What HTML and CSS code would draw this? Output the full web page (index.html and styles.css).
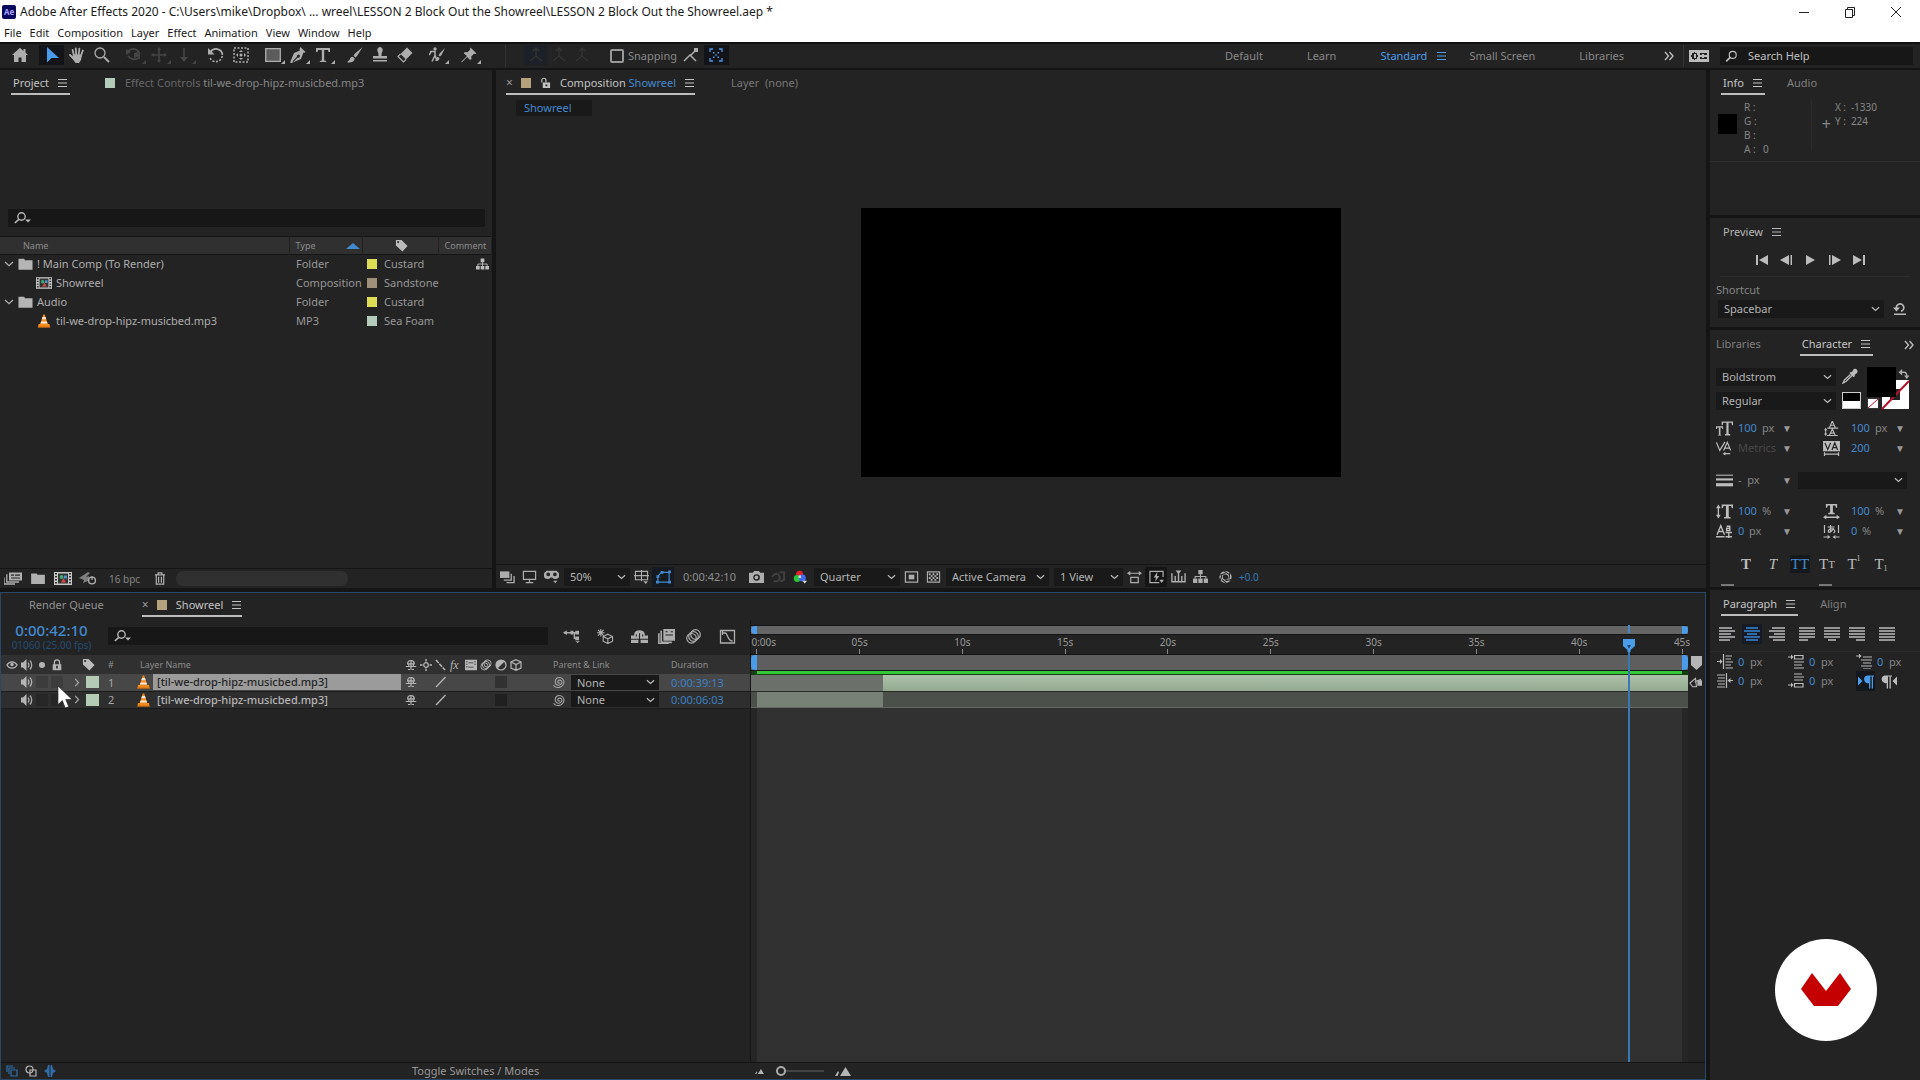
FILE: index.html
```html
<!DOCTYPE html>
<html lang="en">
<head>
<meta charset="utf-8">
<title>Adobe After Effects 2020</title>
<link rel="stylesheet" href="styles.css">
</head>
<body>
<svg class="sprite" aria-hidden="true">
  <symbol id="home" viewBox="0 0 16 16"><path fill="currentColor" d="M8 .8 0 8h2v7h4.500v-4.500h3V15H14V8h2L13.500 5.600V2h-2v1.900z"/></symbol>
  <symbol id="arrow" viewBox="0 0 16 16"><path fill="currentColor" d="M3 0v15.500l4.500-4.500H15z"/></symbol>
  <symbol id="hand" viewBox="0 0 16 16"><path fill="none" stroke="currentColor" stroke-width="1.800" stroke-linecap="round" d="M5 9 3.600 3M7.200 8 6.800 1.400M9.600 8l.8-6.400M11.800 9l2-5.500M4.500 11.500 1 8"/><path fill="currentColor" d="M4 7.500h9L12 13l-2 3H6.500L3 11z"/></symbol>
  <symbol id="zoomer" viewBox="0 0 16 16"><g fill="none" stroke="currentColor"><circle cx="6" cy="6" r="5" stroke-width="1.300"/><path stroke-width="2" d="m10 10 5 5"/></g></symbol>
  <symbol id="orbit" viewBox="0 0 16 16"><path fill="none" stroke="currentColor" stroke-width="1.800" d="M1 5c4-4 8-4 11-1l2 3M2 9c3 4 8 4 11 2M8 8h5v4"/><path fill="currentColor" d="M0 2v6l5-3zM8 6l4-1v5l-4 1z"/></symbol>
  <symbol id="pan" viewBox="0 0 16 16"><path fill="none" stroke="currentColor" stroke-width="1.500" d="M8 1v14M1 8h14"/><path fill="currentColor" d="m8 0 2 3H6zm0 16 2-3H6zM0 8l3-2v4zm16 0-3-2v4z"/></symbol>
  <symbol id="dolly" viewBox="0 0 16 16"><path fill="currentColor" d="M7.200 1h1.600v9H12l-4 5-4-5h3.200z"/></symbol>
  <symbol id="rotate" viewBox="0 0 16 16"><path fill="none" stroke="currentColor" stroke-width="1.700" d="M2.500 5A6.400 6.400 0 0 1 14.400 8"/><path fill="none" stroke="currentColor" stroke-width="1.600" stroke-dasharray="2 1.500" d="M14.200 9A6.400 6.400 0 0 1 1.700 10"/><path fill="currentColor" d="M0 1v6.500h6.500z"/></symbol>
  <symbol id="anchor" viewBox="0 0 16 16"><path fill="none" stroke="currentColor" stroke-width="1.500" stroke-dasharray="2 1.500" d="M1 1h14v14H1z"/><path fill="currentColor" d="m8 3 2 2H6zm0 10 2-2H6zM3 8l2-2v4zm10 0-2-2v4z"/><circle cx="8" cy="8" r="1.500" fill="currentColor"/></symbol>
  <symbol id="rect" viewBox="0 0 16 16"><path fill="#5c5c5c" stroke="currentColor" stroke-width="1.300" d="M.7 1.700h14.600v12.600H.7z"/></symbol>
  <symbol id="pen" viewBox="0 0 16 16"><path fill="currentColor" fill-rule="evenodd" d="m10.500 0 5 5-1.500 1-.6-.6L11 12l-9.500 4L0 15.500 4 6l6-2.500-.6-.9zM2.500 14.200 7 9.700a1.500 1.500 0 1 1 .8.800L3.300 15z"/></symbol>
  <symbol id="type" viewBox="0 0 16 16"><path fill="currentColor" d="M1 1h14v4h-1.500l-.6-2H9.200v10.500l2 .5V15H4.800v-1l2-.5V3H3.100l-.6 2H1z"/></symbol>
  <symbol id="brush" viewBox="0 0 16 16"><path fill="currentColor" d="M15.500.3 8 6.500 6.500 8.800l2 1.800L10 9zM5.800 9.800c-2 0-2.500 1-3 2.700L0 15.200c3 .8 7 0 7.800-3.500z"/></symbol>
  <symbol id="stamp" viewBox="0 0 16 16"><path fill="currentColor" d="M8 0a3 3 0 0 1 2.500 4.200C9.500 6 9.500 7 9.500 9H15v2.500H1V9h5.500c0-2 0-3-1-4.800A3 3 0 0 1 8 0zM1 13h14v1.500H1z"/></symbol>
  <symbol id="eraser" viewBox="0 0 16 16"><path fill="currentColor" d="M10 .5 15.500 6 9 12.500 3.500 7z"/><path fill="none" stroke="currentColor" stroke-width="1.200" d="M3.500 7 1 9.500 6.500 15 9 12.500"/></symbol>
  <symbol id="roto" viewBox="0 0 16 16"><path fill="none" stroke="currentColor" stroke-width="1.500" d="M1 4.500h5v4l-3 6M6 8l2 6M0 8l2-3"/><circle cx="6" cy="2" r="1.700" fill="currentColor"/><path fill="currentColor" d="m16 1-5 5-1.500 2.500 1.500 1L12.500 8zM9 10c-2 0-1 2-3 3.500 2 1 4.500 0 4.500-2.500z"/></symbol>
  <symbol id="pin" viewBox="0 0 16 16"><path fill="currentColor" d="m9.500.5 6 6-1.500.5-1-.3-2.800 2.800.3 2.500-1.500 1L6.200 10 1 15.200 0 15l6-6L2.800 6.500l1-1.500 2.700.3 2.800-2.700L9 1.500z"/></symbol>
  <symbol id="axes" viewBox="0 0 16 16"><path fill="none" stroke="currentColor" stroke-width="1.300" d="M8 1v8l-6 5M8 9l6 5M5 4l3-3 3 3"/></symbol>
  <symbol id="snap" viewBox="0 0 16 16"><path fill="none" stroke="currentColor" stroke-width="1.500" d="m1 14 6-6 6 6M8 8l4-4"/><path fill="currentColor" d="M11 1h4v4h-4z"/></symbol>
  <symbol id="focus" viewBox="0 0 16 16"><path fill="none" stroke="currentColor" stroke-width="1.300" d="M2 5V2h3M11 2h3v3M14 11v3h-3M5 14H2v-3"/><path fill="currentColor" d="M5 5h1.500v1.500H5zm4.500 0H11v1.500H9.500zM5 9.500h1.500V11H5zm4.500 0H11V11H9.500zM7.300 7.300h1.400v1.400H7.300z"/></symbol>
  <symbol id="burger" viewBox="0 0 10 10"><path fill="none" stroke="currentColor" stroke-width="1.200" d="M0 1.500h9M0 5h9M0 8.500h9"/></symbol>
  <symbol id="more" viewBox="0 0 10 10"><path fill="none" stroke="currentColor" stroke-width="1.400" d="m1 1 3.500 4L1 9m4.500-8L9 5 5.500 9"/></symbol>
  <symbol id="workpanel" viewBox="0 0 20 12"><path fill="currentColor" fill-rule="evenodd" d="M0 0h20v12H0zM3 3v2H2v2h1v2h2v1h1V9h2V7h1V5H8V3H6V2H5v1zm2 1h2v4H5zm6-1v2h2V4h2v1h3V3zm0 4v2h7V7h-3v1h-2V7z"/></symbol>
  <symbol id="search" viewBox="0 0 16 16"><g fill="none" stroke="currentColor"><circle cx="9.500" cy="6" r="4.300" stroke-width="1.400"/><path stroke-width="2" d="M6.300 9 1.500 14"/></g></symbol>
  <symbol id="searchmenu" viewBox="0 0 18 12"><g fill="none" stroke="currentColor"><circle cx="7.500" cy="4.500" r="3.700" stroke-width="1.400"/><path stroke-width="1.700" d="M4.800 7.300.8 11"/></g><path fill="currentColor" d="M11 7.500h6L14 10.500z"/></symbol>
  <symbol id="lock" viewBox="0 0 12 14"><path fill="none" stroke="currentColor" stroke-width="1.500" d="M3 7V4a3 3 0 0 1 6 0v3"/><path fill="currentColor" fill-rule="evenodd" d="M1 6h10v7H1zm4 2v3h2V8z"/></symbol>
  <symbol id="unlock" viewBox="0 0 12 14"><path fill="none" stroke="currentColor" stroke-width="1.300" d="M2 6V3.500a2.200 2.200 0 0 1 4.500 0V6"/><path fill="currentColor" fill-rule="evenodd" d="M3 6h8v6H3zm3 2v2h2V8z"/></symbol>
  <symbol id="tag" viewBox="0 0 14 14"><path fill="currentColor" fill-rule="evenodd" d="M1 1h6l6.500 6.500-5.500 6L1 7zm2.300 1.200a1.100 1.100 0 1 0 .1 0z"/></symbol>
  <symbol id="folder" viewBox="0 0 16 12"><path fill="currentColor" d="M.5.5h6l1 1.500h8V12H.5z"/></symbol>
  <symbol id="compicon" viewBox="0 0 18 13"><path fill="#c8c8c8" d="M0 0h18v13H0z"/><path fill="#333" d="M1 1h2v1.500H1zm0 3h2v1.500H1zm0 3h2v1.500H1zm0 3h2v1.500H1zM15 1h2v1.500h-2zm0 3h2v1.500h-2zm0 3h2v1.500h-2zm0 3h2v1.500h-2zM4 1.500h10v10H4z"/><circle cx="7.500" cy="5" r="2" fill="#3dab6c"/><path fill="#5191c9" d="M10 3.500h3v3h-3z"/><path fill="#d14a42" d="m9.500 6 2.500 4.500H7z"/></symbol>
  <symbol id="cone" viewBox="0 0 14 16"><path fill="#f08a1d" d="M6.200.5h1.600l3.500 11h2l.7 4H0l.7-4h2z"/><path fill="#f4e8dc" d="M5.300 3.500h3.400l.8 2.600h-5zM3.700 8.600h6.600l.7 2.300H3z"/><path fill="#b75b0d" d="M0 14.500h14v1H0z"/></symbol>
  <symbol id="tree" viewBox="0 0 14 13"><path fill="currentColor" d="M5 0h4v4H5zM0 8h4v4H0zm5 0h4v4H5zm5 0h4v4h-4z"/><path fill="none" stroke="currentColor" d="M7 4v4M2 8V6h10v2"/></symbol>
  <symbol id="chev" viewBox="0 0 10 6"><path fill="none" stroke="currentColor" stroke-width="1.300" d="m1 1 4 3.700L9 1"/></symbol>
  <symbol id="chevr" viewBox="0 0 6 10"><path fill="none" stroke="currentColor" stroke-width="1.400" d="m1 1 3.700 4L1 9"/></symbol>
  <symbol id="interpret" viewBox="0 0 18 12"><path fill="currentColor" fill-rule="evenodd" d="M5 0h13v8H5zm2 2v1.300h3V2zm4 0v1.300h5V2zM7 5v1h9V5z"/><path fill="none" stroke="currentColor" stroke-width="1.300" d="M3.500 2.500H2.800v7H15M0 5v6.500h11"/></symbol>
  <symbol id="gpu" viewBox="0 0 18 13"><path fill="currentColor" d="m0 6 9-6 2 1-4 4 3-1-1 5-5 2 1-3z" opacity=".65"/><circle cx="13" cy="8.500" r="3.400" fill="none" stroke="currentColor" stroke-width="1.400"/><path fill="none" stroke="currentColor" stroke-width="1.200" d="M13 4v4"/></symbol>
  <symbol id="trash" viewBox="0 0 12 14"><path fill="none" stroke="currentColor" stroke-width="1.300" d="M.5 3h11M4 3V1h4v2M2 3v10h8V3M4.500 5v6.500M7.500 5v6.500"/></symbol>
  <symbol id="previews" viewBox="0 0 16 14"><path fill="currentColor" d="M0 1h10v7H0z"/><path fill="none" stroke="currentColor" stroke-width="1.400" d="M12 3.500v6.800H4M15 6v7H7"/></symbol>
  <symbol id="monitor" viewBox="0 0 16 14"><path fill="none" stroke="currentColor" stroke-width="1.300" d="M1.500 1h13v8.500h-13zM8 9.500V13M4 13h8"/></symbol>
  <symbol id="goggles" viewBox="0 0 18 15"><path fill="currentColor" fill-rule="evenodd" d="M3 0h12l3 3v4c0 3-6 4-8 1H8C6 11 0 10 0 7V3zm2 2.200a2.200 2.200 0 1 0 .1 4.400 2.200 2.200 0 0 0 0-4.400zm8 0a2.200 2.200 0 1 0 .1 4.400 2.200 2.200 0 0 0 0-4.400zM11 12h5l-2.500 3z"/></symbol>
  <symbol id="gridopt" viewBox="0 0 16 15"><path fill="none" stroke="currentColor" stroke-width="1.200" d="M1.500 1.500h13v9h-13zM8 0v12M0 6h16"/><path fill="currentColor" d="M10 12h5l-2.500 3z"/></symbol>
  <symbol id="mask" viewBox="0 0 16 14"><path fill="none" stroke="currentColor" stroke-width="1.300" d="M2 12.500V6l4-4h8v10.500z"/><path fill="currentColor" d="M0 11h3v3H0zm13 0h3v3h-3zM13 0h3v3h-3zM5 .5h3v3H5zM.5 5h3v3h-3z"/></symbol>
  <symbol id="camera" viewBox="0 0 16 13"><path fill="currentColor" fill-rule="evenodd" d="M0 2h4l1.500-2h5L12 2h4v11H0zm8 1.500a3.500 3.500 0 1 0 .1 7 3.500 3.500 0 0 0 0-7zm0 1.500a2 2 0 1 1-.1 4 2 2 0 0 1 0-4z"/></symbol>
  <symbol id="showsnap" viewBox="0 0 16 14"><path fill="none" stroke="currentColor" stroke-width="2" d="M1 7c3-4 6-5 8-1s-3 7-6 5M9 2h5v8l-4 2"/></symbol>
  <symbol id="rgb" viewBox="0 0 16 14"><circle cx="7" cy="4" r="3.700" fill="#e3202b"/><circle cx="4.500" cy="8.500" r="3.700" fill="#27c437"/><circle cx="10" cy="8" r="3.700" fill="#4569f0"/><path fill="#ddd" d="M10 11h5l-2.500 3zM6 5.500h2.500V8H6z"/></symbol>
  <symbol id="roi" viewBox="0 0 16 14"><path fill="none" stroke="currentColor" stroke-width="1.300" d="M1.500 1.500h13v11h-13z"/><path fill="currentColor" d="M5 4.500h6v5H5z"/></symbol>
  <symbol id="alpha" viewBox="0 0 16 14"><path fill="none" stroke="currentColor" stroke-width="1.200" d="M1.500 1.500h13v11h-13z"/><path fill="currentColor" d="M3 3h2v2H3zm4 0h2v2H7zm4 0h2v2h-2zM5 5h2v2H5zm4 0h2v2H9zM3 7h2v2H3zm4 0h2v2H7zm4 0h2v2h-2zM5 9h2v2H5zm4 0h2v2H9z"/></symbol>
  <symbol id="par" viewBox="0 0 16 14"><path fill="none" stroke="currentColor" stroke-width="1.300" d="M1 3h14M4 7.500h8V13H4z"/><path fill="currentColor" d="m0 3 3.500-2.500v5zm16 0-3.500-2.500v5z"/></symbol>
  <symbol id="fast" viewBox="0 0 16 14"><path fill="none" stroke="currentColor" stroke-width="1.300" d="M11 13H1V1h14v6"/><path fill="currentColor" d="m9 1.500-4 6h2.500L6.500 12l4.500-6H8.500zM11 10h5l-2.500 3.500z"/></symbol>
  <symbol id="tlbtn" viewBox="0 0 16 14"><path fill="none" stroke="currentColor" stroke-width="1.500" d="M1 3v9h14V3M4.500 6v6M8 3v9M11.500 6v6"/><path fill="currentColor" d="M5 0h6L8 4z"/></symbol>
  <symbol id="shutter" viewBox="0 0 16 16"><circle cx="8" cy="8" r="5" fill="none" stroke="currentColor" stroke-width="4"/><path fill="none" stroke="#232323" stroke-width="1.200" d="m6 1 6 4M13 3l-1 7M15 11l-7 1M9 15l-5-4M2 12l2-6M1 6l7-2"/></symbol>
  <symbol id="flow" viewBox="0 0 18 14"><path fill="none" stroke="currentColor" stroke-width="1.400" d="M1 3h8M9 3h3v6h2M9 3h7"/><path fill="currentColor" d="M0 3 4 .5v5zM8 1h3v4H8zm5 0h4v4h-4zm0 6h4v4h-4zm0 5h5l-2.500 2z"/></symbol>
  <symbol id="draft" viewBox="0 0 18 16"><path fill="none" stroke="currentColor" stroke-width="1.200" d="m11.500 5.500 5 2.500v5l-5 2.500-5-2.500V8zM6.500 8l5 2.500 5-2.500M11.500 10.500v5M4 0v8M0 4h8M1 1l6 6M7 1 1 7"/></symbol>
  <symbol id="shy" viewBox="0 0 16 14"><path fill="none" stroke="currentColor" stroke-width="1.600" d="M3.500 5.500a4.500 4.500 0 0 1 9 0zM8 1v12M1 9h14M5 5v4M11 5v4"/><path fill="none" stroke="currentColor" stroke-width="1.500" d="M4 13h3M9 13h3"/></symbol>
  <symbol id="shyall" viewBox="0 0 16 14"><path fill="currentColor" d="M3 5a5 4 0 0 1 10 0v1h3v3H0V6h3zM0 10h7v3H0zm9 0h7v3H9z"/><path stroke="#222" d="M8 4v10M5 5v2M11 5v2"/></symbol>
  <symbol id="frameblend" viewBox="0 0 16 14"><path fill="currentColor" fill-rule="evenodd" d="M5 0h11v11H5zm2 2v1h2V2zm5 0v1h2V2zM7 5v1h7V5z"/><path fill="none" stroke="currentColor" stroke-width="1.500" d="M3.500 2H3v10.500h10M.8 4v9.800H10"/></symbol>
  <symbol id="film" viewBox="0 0 14 12"><path fill="currentColor" fill-rule="evenodd" d="M0 0h14v12H0zm1.500 1.500v1.300h1.400V1.500zm0 3v1.300h1.400V4.500zm0 3v1.300h1.400V7.500zM4 3v1h6V3zm0 5v1h6V8zm7-6.500v1.300h1.400V1.500zm0 3v1.300h1.400V4.500z"/></symbol>
  <symbol id="blur" viewBox="0 0 16 15"><g fill="none" stroke="currentColor" stroke-width="1.200"><circle cx="10" cy="5.500" r="4.800"/><circle cx="8" cy="7.500" r="4.800"/><circle cx="6" cy="9.300" r="4.800"/></g></symbol>
  <symbol id="graph" viewBox="0 0 16 15"><path fill="none" stroke="currentColor" stroke-width="1.300" d="M1 1.500h14V14H1zM3 4h3c2 0 2 8 7 8M3 2v4"/></symbol>
  <symbol id="eye" viewBox="0 0 14 10"><path fill="none" stroke="currentColor" stroke-width="1.500" d="M1 5c3-5 9-5 12 0-3 5-9 5-12 0z"/><circle cx="7" cy="4.500" r="2" fill="currentColor"/></symbol>
  <symbol id="speaker" viewBox="0 0 12 12"><path fill="currentColor" d="M0 3.500h2L5.500 0v12L2 8.500H0z"/><path fill="none" stroke="currentColor" stroke-width="1.200" d="M7 3.500c1.200 1.500 1.200 3.500 0 5M8.800 1.500c2.600 2.500 2.600 6.500 0 9"/></symbol>
  <symbol id="dot" viewBox="0 0 14 12"><circle cx="7" cy="6" r="3.500" fill="currentColor"/></symbol>
  <symbol id="sun" viewBox="0 0 12 12"><circle cx="6" cy="6" r="2.300" fill="none" stroke="currentColor" stroke-width="1.200"/><path stroke="currentColor" stroke-width="1.400" d="M6 0v2.500M6 9.500V12M0 6h2.500M9.500 6H12"/></symbol>
  <symbol id="bslash" viewBox="0 0 12 12"><path stroke="currentColor" stroke-width="1.500" stroke-dasharray="4 1" d="m1 1 9 10"/></symbol>
  <symbol id="slash" viewBox="0 0 12 12"><path stroke="currentColor" stroke-width="1.300" d="m1 11 9.500-10"/></symbol>
  <symbol id="adjust" viewBox="0 0 12 12"><circle cx="6" cy="6" r="5" fill="none" stroke="currentColor" stroke-width="1.200"/><path fill="currentColor" d="M9.600 2.400A5 5 0 0 0 2.400 9.600z"/></symbol>
  <symbol id="cube" viewBox="0 0 12 12"><path fill="none" stroke="currentColor" stroke-width="1.200" d="m6 .7 5 2.300v6l-5 2.300L1 9V3zM1 3l5 2.500L11 3M6 5.500v6"/></symbol>
  <symbol id="whip" viewBox="0 0 12 12"><path fill="none" stroke="currentColor" stroke-width="1.100" d="M7 6.500C6.500 7.500 4.500 7 4.800 5.500S7.500 3.500 8.500 5s0 4-2.500 4.200S2 7.500 2.200 5.500 4 1.500 6.500 1.500 11 4 11 6s-2 5.500-5.500 5.500S1 10 .8 9"/></symbol>
  <symbol id="marker" viewBox="0 0 11 14"><path fill="currentColor" d="M0 0h11v9l-5.500 5L0 9z"/></symbol>
  <symbol id="compbtn" viewBox="0 0 14 12"><path fill="none" stroke="currentColor" stroke-width="1.200" d="m1 6 6-5 1 9H4zM6 5l7-3"/><path fill="currentColor" d="M9 3h5v6H9z"/></symbol>
  <symbol id="head" viewBox="0 0 12 13"><path fill="#4a9be8" d="M0 0h12v7l-4.500 4V13h-3v-2L0 7z"/><path fill="#1e4a77" d="M4 6h4l-2 4z"/></symbol>
  <symbol id="first" viewBox="0 0 13 10"><path fill="currentColor" d="M0 0h2v10H0zM12 0v10L3 5z"/></symbol>
  <symbol id="prev" viewBox="0 0 13 10"><path fill="currentColor" d="M9 0v10L0 5zM10.500 0H12v10h-1.500z"/></symbol>
  <symbol id="play" viewBox="0 0 13 10"><path fill="currentColor" d="M2 0v10l9-5z"/></symbol>
  <symbol id="loop" viewBox="0 0 14 12"><path fill="none" stroke="currentColor" stroke-width="1.600" d="M3.500 5.500a3.700 3.700 0 1 1 4.500 2.700M1 11.200h12"/><path fill="currentColor" d="M0 4.500h7L3.500 8.500z"/></symbol>
  <symbol id="dropper" viewBox="0 0 16 16"><path fill="currentColor" d="M11 2c2-3 6 0 4 3l-2.500 2 .5 1-1.500 1.200L7.500 5 9 3.700l1 .5z"/><path fill="none" stroke="currentColor" stroke-width="1.300" d="M8.500 6.500 2.500 12 1 15l3-1.500 6-6"/></symbol>
  <symbol id="swap" viewBox="0 0 12 12"><path fill="none" stroke="currentColor" stroke-width="1.500" d="M3 3.500h3c2 0 3 1 3 4"/><path fill="currentColor" d="M0 3.500 4 0v7zM6 7h6l-3 4z"/></symbol>
  <symbol id="size" viewBox="0 0 18 15"><path fill="currentColor" d="M6 0h12v4h-1l-.7-2.500h-3V13l1.700.6V15H9.500v-1.400l1.500-.6V1.500H7.700L7 4H6zM0 5h7.500v3h-.8L6 6.500H4.700V14l1 .4V15H2v-.6l1-.4V6.500H1.500L.8 8H0z"/></symbol>
  <symbol id="leading" viewBox="0 0 18 18"><path fill="none" stroke="currentColor" stroke-width="1.300" d="M6.500 8 10 0l3.500 8M8 5h4M4 8.500h13M6.500 17 10 9.500l3.500 7.500M8 14.500h4M3.500 17.300h13M2 10v6"/><path fill="currentColor" d="m2 8 2 3H0zm0 10 2-3H0z"/></symbol>
  <symbol id="kern" viewBox="0 0 18 14"><path fill="none" stroke="currentColor" stroke-width="1.300" d="M.5.500 4 9 9.500 0M8 9l4-8.500L15.500 9M9.500 6.500h5M9 12.500h6"/><path fill="currentColor" d="m7 12.500 3-2v4z"/></symbol>
  <symbol id="track" viewBox="0 0 18 16"><path fill="currentColor" d="M0 0h18v11H0z"/><path fill="none" stroke="#222" stroke-width="1.300" d="m2 2 3 7 3-7M9.500 9.500l3-7.500 3 7.500M10.500 7h4"/><path fill="none" stroke="currentColor" stroke-width="1.300" d="M2 14h14M1.500 12v4M16.500 12v4"/></symbol>
  <symbol id="strokew" viewBox="0 0 16 12"><path stroke="currentColor" d="M0 1h16"/><path stroke="currentColor" stroke-width="2" d="M0 5h16"/><path stroke="currentColor" stroke-width="3" d="M0 10h16"/></symbol>
  <symbol id="vscale" viewBox="0 0 18 15"><path fill="currentColor" d="M6 0h12v4h-1.200L16 1.600h-2.500V13l2 .6V15H8.500v-1.400l2-.6V1.600H8L7.200 4H6zM2.500 0l2.500 4H3.200v7H5l-2.500 4L0 11h1.800V4H0z"/></symbol>
  <symbol id="hscale" viewBox="0 0 18 16"><path fill="currentColor" d="M3 0h12v4h-1.200L13 1.600h-2.500V9l2 .5V11H5.500V9.500l2-.5V1.600H5L4.200 4H3zM0 14l3.500-2.500v1.700h11v-1.700L18 14l-3.500 2.500v-1.700h-11v1.700z"/></symbol>
  <symbol id="baseline" viewBox="0 0 16 14"><path fill="none" stroke="currentColor" stroke-width="1.300" d="M1 10 4.500 1.500 8 10M2.500 7h4M0 12h8M10 2h3v4h-3V4h3M9 8h6M12 8v5M9 12h6"/></symbol>
  <symbol id="tsume" viewBox="0 0 16 15"><path fill="none" stroke="currentColor" stroke-width="1.200" d="M1 1v8M15 1v8M4 3h7M7 1v7M10 4c-1 3-4 5-5 4s1-4 4-3 3 3 1 4M0 13h4M16 13h-4"/><path fill="currentColor" d="m7 13-3-2v4zm2 0 3-2v4z"/></symbol>
  <symbol id="aleft" viewBox="0 0 16 14"><path stroke="currentColor" stroke-width="1.300" d="M0 1h13M0 4h16M0 7h12M0 10h16M0 13h11"/></symbol>
  <symbol id="acenter" viewBox="0 0 16 14"><path stroke="currentColor" stroke-width="1.300" d="M2 1h12M0 4h16M3 7h10M0 10h16M2 13h12"/></symbol>
  <symbol id="aright" viewBox="0 0 16 14"><path stroke="currentColor" stroke-width="1.300" d="M3 1h13M0 4h16M5 7h11M0 10h16M4 13h12"/></symbol>
  <symbol id="jleft" viewBox="0 0 16 14"><path stroke="currentColor" stroke-width="1.300" d="M0 1h16M0 4h16M0 7h16M0 10h16M0 13h9"/></symbol>
  <symbol id="jcenter" viewBox="0 0 16 14"><path stroke="currentColor" stroke-width="1.300" d="M0 1h16M0 4h16M0 7h16M0 10h16M4 13h8"/></symbol>
  <symbol id="jright" viewBox="0 0 16 14"><path stroke="currentColor" stroke-width="1.300" d="M0 1h16M0 4h16M0 7h16M0 10h16M7 13h9"/></symbol>
  <symbol id="jall" viewBox="0 0 16 14"><path stroke="currentColor" stroke-width="1.300" d="M0 1h16M0 4h16M0 7h16M0 10h16M0 13h16"/></symbol>
  <symbol id="indl" viewBox="0 0 16 15"><path fill="none" stroke="currentColor" stroke-width="1.200" d="M6.500 0v15M8.500 2H15M8.500 5H14M8.500 8H16M8.500 11H14M8.500 14H16M0 7.500h4"/><path fill="currentColor" d="M5.500 7.500 3 5v5z"/></symbol>
  <symbol id="indr" viewBox="0 0 16 15"><path fill="none" stroke="currentColor" stroke-width="1.200" d="M9.500 0v15M0 2h8M1 5h7M0 8h8M1 11h7M0 14h8M12 7.500h4"/><path fill="currentColor" d="m10.500 7.500 3-2.500v5z"/></symbol>
  <symbol id="before" viewBox="0 0 16 15"><path fill="none" stroke="currentColor" stroke-width="1.200" d="M6.500 1.500H15V5H6.500zM6 8h10M6 11h8M6 14h10M0 3h4"/><path fill="currentColor" d="M5.500 3 3 .5v5z"/></symbol>
  <symbol id="after" viewBox="0 0 16 15"><path fill="none" stroke="currentColor" stroke-width="1.200" d="M6.500 10.500H15V14H6.500zM6 1h8M6 4h10M6 7h9M0 12h4"/><path fill="currentColor" d="M5.500 12 3 9.500v5z"/></symbol>
  <symbol id="firstline" viewBox="0 0 16 15"><path fill="none" stroke="currentColor" stroke-width="1.200" d="M7 3h9M5 6h11M7 9h8M5 12h11M7 15h8M0 2h4"/><path fill="currentColor" d="M5.500 2 3-.5v5z"/></symbol>
  <symbol id="ltr" viewBox="0 0 16 14"><path fill="currentColor" d="M0 2v9l4.500-4.500zM9 1h7v1h-1v12h-1.300V2h-1.400v12H11V8.500a3.700 3.700 0 0 1-2-7.500z"/></symbol>
  <symbol id="rtl" viewBox="0 0 16 14"><path fill="currentColor" d="M16 2v9l-4.500-4.500zM3.500 1H11v1H9.800v12H8.500V2H7v12H5.700V8.500A3.700 3.700 0 0 1 3.500 1z"/></symbol>
  <symbol id="layersw" viewBox="0 0 12 12"><path fill="none" stroke="currentColor" stroke-width="1.200" d="M5 5h6v6H5zM3 9V3h6M1 7V1h6"/></symbol>
  <symbol id="modes" viewBox="0 0 12 12"><circle cx="4.500" cy="4.500" r="3.500" fill="none" stroke="currentColor" stroke-width="1.200"/><path fill="none" stroke="currentColor" stroke-width="1.200" d="M5 5h6v6H5z"/></symbol>
  <symbol id="inout" viewBox="0 0 12 12"><path fill="currentColor" d="M4 0h1.500v12H4l-1-4-3-2 3-2zM8 0H6.500v12H8l1-4 3-2-3-2z"/></symbol>
  <symbol id="mtn" viewBox="0 0 16 9"><path fill="currentColor" d="m5 9 5.500-9L16 9zM0 9l3-5 1 1.500L2.500 9z"/></symbol>
</svg>

<header class="titlebar">
  <svg class="ae" viewBox="0 0 14 14"><rect width="14" height="14" rx="2" fill="#0a0a5c"/><text x="2" y="10" font-family="Noto Sans" font-size="8" font-weight="700" fill="#a9a3ff">Ae</text></svg>
  <h1>Adobe After Effects 2020 - C:\Users\mike\Dropbox\ ... wreel\LESSON 2 Block Out the Showreel\LESSON 2 Block Out the Showreel.aep *</h1>
  <div class="wincontrols">
    <button aria-label="Minimize"><svg viewBox="0 0 12 12"><path stroke="#222" d="M1 6.500h10"/></svg></button>
    <button aria-label="Restore"><svg viewBox="0 0 12 12"><path fill="none" stroke="#222" d="M1.500 3.500h7v8h-7zM3.500 3.500v-2h7v8h-2"/></svg></button>
    <button aria-label="Close"><svg viewBox="0 0 12 12"><path stroke="#222" d="m1 1 10 10M11 1 1 11"/></svg></button>
  </div>
</header>
<nav class="menubar">
  <button>File</button><button>Edit</button><button>Composition</button><button>Layer</button><button>Effect</button><button>Animation</button><button>View</button><button>Window</button><button>Help</button>
</nav>

<div class="toolbar">
  <div class="tools"><button aria-label="Home"><svg><use href="#home"/></svg></button></div>
  <div class="tools"><button class="on" aria-label="Selection"><svg><use href="#arrow"/></svg></button><button aria-label="Hand"><svg><use href="#hand"/></svg></button><button aria-label="Zoom"><svg><use href="#zoomer"/></svg></button></div>
  <div class="tools dim"><button class="sub" aria-label="Orbit"><svg><use href="#orbit"/></svg></button><button class="sub" aria-label="Pan"><svg><use href="#pan"/></svg></button><button class="sub" aria-label="Dolly"><svg><use href="#dolly"/></svg></button></div>
  <div class="tools"><button aria-label="Rotate"><svg><use href="#rotate"/></svg></button><button aria-label="Anchor point"><svg><use href="#anchor"/></svg></button></div>
  <div class="tools"><button class="sub" aria-label="Rectangle"><svg><use href="#rect"/></svg></button><button class="sub" aria-label="Pen"><svg><use href="#pen"/></svg></button><button class="sub" aria-label="Type"><svg><use href="#type"/></svg></button></div>
  <div class="tools"><button aria-label="Brush"><svg><use href="#brush"/></svg></button><button aria-label="Clone stamp"><svg><use href="#stamp"/></svg></button><button aria-label="Eraser"><svg><use href="#eraser"/></svg></button></div>
  <div class="tools"><button class="sub" aria-label="Roto brush"><svg><use href="#roto"/></svg></button></div>
  <div class="tools"><button class="sub" aria-label="Puppet pin"><svg><use href="#pin"/></svg></button></div>
  <i class="vsep wide"></i>
  <div class="tools faint"><button class="lit" aria-label="Local axis"><svg><use href="#axes"/></svg></button><button aria-label="World axis"><svg><use href="#axes"/></svg></button><button aria-label="View axis"><svg><use href="#axes"/></svg></button></div>
  <label class="snapping"><input type="checkbox">Snapping</label>
  <div class="tools"><button aria-label="Snap edges"><svg><use href="#snap"/></svg></button><button class="on" aria-label="Snap features"><svg><use href="#focus"/></svg></button></div>
  <div class="workspaces">
    <button>Default</button><button>Learn</button><button class="cur">Standard <svg class="burger"><use href="#burger"/></svg></button><button>Small Screen</button><button>Libraries</button>
  </div>
  <button class="more" aria-label="More workspaces"><svg class="burger"><use href="#more"/></svg></button>
  <i class="vsep"></i>
  <button class="wp" aria-label="Workspace settings"><svg><use href="#workpanel"/></svg></button>
  <label class="help"><svg><use href="#search"/></svg><input type="text" placeholder="Search Help" aria-label="Search Help"></label>
</div>

<main class="workspace">
  <div class="left">
    <div class="upper">
      <section class="panel project">
        <div class="tabs"><button class="tab cur">Project <svg class="burger"><use href="#burger"/></svg></button><button class="tab fx"><i class="sw seafoam"></i><span><em>Effect Controls</em> til-we-drop-hipz-musicbed.mp3</span></button></div>
        <label class="searchbox"><svg><use href="#searchmenu"/></svg><input type="text" aria-label="Search project"></label>
        <table class="files">
          <colgroup><col class="c-name"><col class="c-type"><col class="c-label"><col class="c-comment"></colgroup>
          <thead><tr><th>Name</th><th>Type <i class="sort"></i></th><th class="tagth"><svg class="i13"><use href="#tag"/></svg></th><th>Comment</th></tr></thead>
          <tbody>
            <tr><td><span class="cell"><svg class="chev"><use href="#chev"/></svg><svg class="fold"><use href="#folder"/></svg>! Main Comp (To Render)</span></td><td>Folder</td><td><i class="sw custard"></i>Custard</td><td class="treetd"><svg class="i13"><use href="#tree"/></svg></td></tr>
            <tr><td><span class="cell child"><svg class="compi"><use href="#compicon"/></svg>Showreel</span></td><td>Composition</td><td><i class="sw sand"></i>Sandstone</td><td></td></tr>
            <tr><td><span class="cell"><svg class="chev"><use href="#chev"/></svg><svg class="fold"><use href="#folder"/></svg>Audio</span></td><td>Folder</td><td><i class="sw custard"></i>Custard</td><td></td></tr>
            <tr><td><span class="cell child"><svg class="compi"><use href="#cone"/></svg>til-we-drop-hipz-musicbed.mp3</span></td><td>MP3</td><td><i class="sw seafoam"></i>Sea Foam</td><td></td></tr>
          </tbody>
        </table>
        <div class="projfoot">
          <button aria-label="Interpret footage"><svg><use href="#interpret"/></svg></button><button aria-label="New folder"><svg class="small"><use href="#folder"/></svg></button><button aria-label="New composition"><svg><use href="#compicon"/></svg></button><button aria-label="Project settings"><svg><use href="#gpu"/></svg></button><button class="bpc">16 bpc</button><button aria-label="Delete"><svg><use href="#trash"/></svg></button>
          <i class="hscroll"></i>
        </div>
      </section>

      <section class="panel viewer">
        <div class="tabs"><button class="tab cur comp"><span class="x">×</span><i class="sw sand2"></i><svg class="lk"><use href="#unlock"/></svg><span>Composition <b>Showreel</b></span><svg class="burger"><use href="#burger"/></svg></button><button class="tab layer">Layer&nbsp; (none)</button></div>
        <button class="crumb">Showreel</button>
        <div class="stage"><div class="canvas"></div></div>
        <div class="viewfoot">
          <button aria-label="Always preview"><svg><use href="#previews"/></svg></button><button aria-label="Primary viewer"><svg><use href="#monitor"/></svg></button><button aria-label="VR"><svg><use href="#goggles"/></svg></button>
          <select class="s-zoom" aria-label="Magnification"><option>50%</option></select>
          <button aria-label="Guides"><svg><use href="#gridopt"/></svg></button><button class="on" aria-label="Mask visibility"><svg><use href="#mask"/></svg></button>
          <button class="time">0:00:42:10</button>
          <button aria-label="Snapshot"><svg><use href="#camera"/></svg></button><button class="off" aria-label="Show snapshot"><svg><use href="#showsnap"/></svg></button><button aria-label="Channels"><svg><use href="#rgb"/></svg></button>
          <select class="s-res" aria-label="Resolution"><option>Quarter</option></select>
          <button aria-label="Region of interest"><svg><use href="#roi"/></svg></button><button aria-label="Transparency grid"><svg><use href="#alpha"/></svg></button>
          <select class="s-cam" aria-label="3D view"><option>Active Camera</option></select>
          <select class="s-view" aria-label="View layout"><option>1 View</option></select>
          <button aria-label="Pixel aspect"><svg><use href="#par"/></svg></button><button class="onw" aria-label="Fast previews"><svg><use href="#fast"/></svg></button><button aria-label="Timeline"><svg><use href="#tlbtn"/></svg></button><button aria-label="Flowchart"><svg><use href="#tree"/></svg></button>
          <button class="exp" aria-label="Exposure"><svg><use href="#shutter"/></svg></button><span class="blue">+0.0</span>
        </div>
      </section>
    </div>

    <section class="panel timeline">
      <div class="tabs tltabs"><button class="tab rq">Render Queue</button><button class="tab cur tlcomp"><span class="x">×</span><i class="sw sand2"></i><span>Showreel</span><svg class="burger"><use href="#burger"/></svg></button></div>
      <div class="tlbody">
        <div class="layers">
          <div class="tlhead">
            <div class="tc"><button class="now">0:00:42:10</button><small>01060 (25.00 fps)</small></div>
            <label class="searchbox tls"><svg><use href="#searchmenu"/></svg><input type="text" aria-label="Search layers"></label>
            <div class="tlicons"><button aria-label="Mini flowchart"><svg><use href="#flow"/></svg></button><button aria-label="Draft 3D"><svg><use href="#draft"/></svg></button><button aria-label="Hide shy"><svg><use href="#shyall"/></svg></button><button aria-label="Frame blending"><svg><use href="#frameblend"/></svg></button><button aria-label="Motion blur"><svg><use href="#blur"/></svg></button><button class="last" aria-label="Graph editor"><svg><use href="#graph"/></svg></button></div>
          </div>
          <table class="layertable">
            <colgroup><col class="l-av"><col class="l-tag"><col class="l-num"><col class="l-name"><col class="l-sw"><col class="l-parent"><col class="l-dur"><col></colgroup>
            <thead><tr>
              <th><span class="av"><svg><use href="#eye"/></svg><svg><use href="#speaker"/></svg><svg><use href="#dot"/></svg><svg><use href="#lock"/></svg></span></th>
              <th class="tagcell"><svg class="i13"><use href="#tag"/></svg></th><th>#</th><th class="ln">Layer Name</th>
              <th><span class="switches"><svg><use href="#shy"/></svg><svg><use href="#sun"/></svg><svg><use href="#bslash"/></svg><i class="fxl">fx</i><svg><use href="#film"/></svg><svg><use href="#blur"/></svg><svg><use href="#adjust"/></svg><svg><use href="#cube"/></svg></span></th>
              <th>Parent &amp; Link</th><th>Duration</th><th></th>
            </tr></thead>
            <tbody>
              <tr class="sel">
                <td><span class="av"><i></i><svg><use href="#speaker"/></svg><i class="slot"></i><i class="slot"></i></span></td>
                <td><span class="cell tagc"><svg class="chevr"><use href="#chevr"/></svg><i class="sw big seafoam2"></i></span></td><td>1</td>
                <td><span class="cell lname"><svg><use href="#cone"/></svg><b>[til-we-drop-hipz-musicbed.mp3]</b></span></td>
                <td><span class="switches"><svg><use href="#shy"/></svg><i></i><svg><use href="#slash"/></svg><i></i><i></i><i></i><i class="slot"></i></span></td>
                <td><span class="cell"><svg class="whip"><use href="#whip"/></svg><select aria-label="Parent of layer 1"><option>None</option></select></span></td><td class="dur">0:00:39:13</td><td></td>
              </tr>
              <tr>
                <td><span class="av"><i></i><svg><use href="#speaker"/></svg><i class="slot"></i><i class="slot"></i></span></td>
                <td><span class="cell tagc"><svg class="chevr"><use href="#chevr"/></svg><i class="sw big seafoam2"></i></span></td><td>2</td>
                <td><span class="cell lname"><svg><use href="#cone"/></svg><b>[til-we-drop-hipz-musicbed.mp3]</b></span></td>
                <td><span class="switches"><svg><use href="#shy"/></svg><i></i><svg><use href="#slash"/></svg><i></i><i></i><i></i><i class="slot"></i></span></td>
                <td><span class="cell"><svg class="whip"><use href="#whip"/></svg><select aria-label="Parent of layer 2"><option>None</option></select></span></td><td class="dur">0:00:06:03</td><td></td>
              </tr>
            </tbody>
          </table>
        </div>
        <div class="graph">
          <div class="navi"><i></i><i></i></div>
          <div class="ruler"><ol><li>0:00s</li><li>05s</li><li>10s</li><li>15s</li><li>20s</li><li>25s</li><li>30s</li><li>35s</li><li>40s</li><li>45s</li></ol></div>
          <div class="workarea"><i></i><i></i></div>
          <div class="cache"><i></i></div>
          <div class="bar one"><i></i></div>
          <div class="bar two"><i></i></div>
          <div class="empty"><i></i></div>
          <div class="playlane"><div class="playhead" style="left:94.22%"><svg><use href="#head"/></svg></div></div>
        </div>
        <div class="markers"><svg><use href="#marker"/></svg><svg class="cb"><use href="#compbtn"/></svg></div>
      </div>
      <div class="tlfoot">
        <div class="footl"><svg><use href="#layersw"/></svg><svg class="w"><use href="#modes"/></svg><svg><use href="#inout"/></svg></div>
        <button class="toggle">Toggle Switches / Modes</button>
        <div class="zoomer"><svg class="m1"><use href="#mtn"/></svg><input type="range" min="0" max="100" value="0" aria-label="Timeline zoom"><svg class="m2"><use href="#mtn"/></svg></div>
      </div>
    </section>
  </div>

  <aside class="right">
    <section class="panel info">
      <div class="tabs"><button class="tab cur">Info <svg class="burger"><use href="#burger"/></svg></button><button class="tab">Audio</button></div>
      <div class="infobody">
        <i class="chip"></i>
        <dl><dt>R :</dt><dd></dd><dt>G :</dt><dd></dd><dt>B :</dt><dd></dd><dt>A :</dt><dd>0</dd></dl>
        <div class="xy"><span class="plus">+</span><dl><dt>X :</dt><dd>-1330</dd><dt>Y :</dt><dd>224</dd></dl></div>
      </div>
    </section>

    <section class="panel preview">
      <div class="tabs"><button class="tab">Preview <svg class="burger"><use href="#burger"/></svg></button></div>
      <div class="transport"><button aria-label="First frame"><svg><use href="#first"/></svg></button><button aria-label="Previous frame"><svg><use href="#prev"/></svg></button><button aria-label="Play"><svg><use href="#play"/></svg></button><button aria-label="Next frame"><svg class="flip"><use href="#prev"/></svg></button><button aria-label="Last frame"><svg class="flip"><use href="#first"/></svg></button></div>
      <label class="muted" for="shortcut">Shortcut</label>
      <div class="shortrow"><select id="shortcut"><option>Spacebar</option></select><button aria-label="Reset"><svg><use href="#loop"/></svg></button></div>
    </section>

    <section class="panel character">
      <div class="tabs"><button class="tab lib">Libraries</button><button class="tab cur">Character <svg class="burger"><use href="#burger"/></svg></button><button class="more" aria-label="More panels"><svg class="burger"><use href="#more"/></svg></button></div>
      <div class="fontrow">
        <div class="fontsel"><select aria-label="Font family"><option>Boldstrom</option></select><select aria-label="Font style"><option>Regular</option></select></div>
        <div class="picks"><svg><use href="#dropper"/></svg><i class="bw"></i></div>
        <svg class="fillstroke" viewBox="0 0 44 44"><path fill="#fff" d="M15 13h27v29H15z"/><path fill="#222" d="M23 22h10v11H23z"/><path stroke="#b3122d" stroke-width="2" d="M15 42 42 14"/><path d="M0 0h29v30H0z"/><path fill="#fff" stroke="#333" d="M.5 31.500h11v10H.5z"/><path stroke="#b3122d" d="M1 41 11 32"/><use href="#swap" x="31" y="2" width="12" height="11"/></svg>
      </div>
      <div class="grid">
        <svg><use href="#size"/></svg><label><input value="100" aria-label="Font size"> px</label><b>▼</b><svg><use href="#leading"/></svg><label><input value="100" aria-label="Leading"> px</label><b>▼</b>
        <svg><use href="#kern"/></svg><label class="ghost">Metrics</label><b>▼</b><svg><use href="#track"/></svg><label><input value="200" aria-label="Tracking"></label><b>▼</b>
      </div>
      <div class="grid strokerow"><svg><use href="#strokew"/></svg><label>- &nbsp;px</label><b>▼</b><select aria-label="Stroke order"><option></option></select></div>
      <div class="grid">
        <svg><use href="#vscale"/></svg><label><input value="100" aria-label="Vertical scale"> %</label><b>▼</b><svg><use href="#hscale"/></svg><label><input value="100" aria-label="Horizontal scale"> %</label><b>▼</b>
        <svg><use href="#baseline"/></svg><label><input class="n1" value="0" aria-label="Baseline shift"> px</label><b>▼</b><svg><use href="#tsume"/></svg><label><input class="n1" value="0" aria-label="Tsume"> %</label><b>▼</b>
      </div>
      <div class="faux"><button><b>T</b></button><button><em>T</em></button><button class="on">TT</button><button>T<small>T</small></button><button>T<sup>1</sup></button><button>T<sub>1</sub></button></div>
      <div class="peek"><i></i><i></i></div>
    </section>

    <section class="panel paragraph">
      <div class="tabs"><button class="tab cur">Paragraph <svg class="burger"><use href="#burger"/></svg></button><button class="tab">Align</button></div>
      <div class="aligns"><button aria-label="Left"><svg><use href="#aleft"/></svg></button><button class="on" aria-label="Center"><svg><use href="#acenter"/></svg></button><button aria-label="Right"><svg><use href="#aright"/></svg></button><i></i><button aria-label="Justify left"><svg><use href="#jleft"/></svg></button><button aria-label="Justify center"><svg><use href="#jcenter"/></svg></button><button aria-label="Justify right"><svg><use href="#jright"/></svg></button><i></i><button aria-label="Justify all"><svg><use href="#jall"/></svg></button></div>
      <div class="indents">
        <label><svg><use href="#indl"/></svg><input class="n1" value="0" aria-label="Indent left"> px</label><label><svg><use href="#before"/></svg><input class="n1" value="0" aria-label="Space before"> px</label><label><svg><use href="#firstline"/></svg><input class="n1" value="0" aria-label="First line indent"> px</label>
        <label><svg><use href="#indr"/></svg><input class="n1" value="0" aria-label="Indent right"> px</label><label><svg><use href="#after"/></svg><input class="n1" value="0" aria-label="Space after"> px</label><span class="dirs"><button class="on" aria-label="Left to right"><svg><use href="#ltr"/></svg></button><button aria-label="Right to left"><svg><use href="#rtl"/></svg></button></span>
      </div>
    </section>
  </aside>
</main>

<svg class="cursor" viewBox="0 0 16 24" aria-hidden="true"><path fill="#fff" stroke="#222" stroke-width=".6" d="M1 1v18.500l4.300-4 3 7.500 3.400-1.400-3-7.200H15z"/></svg>
<svg class="badge" viewBox="0 0 102 102" role="img" aria-label="Logo"><circle cx="51" cy="51" r="51" fill="#fff"/><path fill="#c40000" d="M37 34 26 50l13 17h24l13-17-11-16-14 18z"/></svg>
</body>
</html>
```

FILE: styles.css
```css
* { box-sizing: border-box; }
body {
  margin: 0; height: 100vh; overflow: hidden; display: flex; flex-direction: column;
  background: #151515; color: #a6a6a6;
  font: 11px/14px "Noto Sans", "Open Sans", sans-serif;
}
button, input, select { font: inherit; color: inherit; background: none; border: 0; padding: 0; margin: 0; border-radius: 0; }
button { display: inline-flex; align-items: center; white-space: nowrap; }
input { min-width: 0; outline: 0; }
svg { display: block; flex: none; width: 16px; height: 16px; overflow: visible; }
i { display: block; flex: none; }
em { font-style: normal; }
.sprite { position: absolute; width: 0; height: 0; }
select {
  appearance: none; background: #191919 url("data:image/svg+xml,%3Csvg xmlns='http://www.w3.org/2000/svg' viewBox='0 0 10 6'%3E%3Cpath fill='none' stroke='%23bbb' stroke-width='1.300' d='m1 1 4 3.700L9 1'/%3E%3C/svg%3E") no-repeat right 4px center / 9px 6px;
  padding: 0 16px 0 6px; color: #b4b4b4;
}
.blue { color: #3478b8; }

/* Title and menus */
.titlebar { display: flex; align-items: center; height: 24px; padding-left: 2px; background: #fff; color: #1a1a1a; flex: none; }
.ae { width: 14px; height: 14px; margin-right: 4px; }
h1 { margin: 0; font-size: 12px; line-height: 20px; font-weight: 400; flex: 1; white-space: nowrap; }
.wincontrols { display: flex; gap: 34px; padding-right: 18px; }
.wincontrols svg { width: 12px; height: 12px; }
.menubar { display: flex; gap: 8px; height: 18px; padding-left: 4px; background: #fff; color: #1a1a1a; flex: none; }
.menubar button { height: 18px; }

/* Toolbar */
.toolbar { display: flex; align-items: center; height: 26px; flex: none; padding: 0 7px; background: #232323; border-top: 2px solid #111; color: #888; }
.tools { display: flex; margin: 0 7px 2px 0; color: #adadad; }
.tools button { width: 25px; height: 20px; justify-content: center; position: relative; }
.tools .sub::after { content: ""; position: absolute; right: 0; bottom: 1px; border: 2px solid; border-color: transparent currentColor currentColor transparent; }
.tools .on { color: #4a9bea; background: #121418; }
.tools.dim { color: #454545; }
.tools.faint { color: #343434; }
.tools.faint button { width: 23px; }
.faint .lit { background: #1b2126; }
.vsep { width: 1px; height: 22px; background: #333; }
.vsep.wide { margin: 0 18px 0 17px; }
.snapping { display: flex; align-items: center; gap: 4px; margin: 0 2px 0 10px; }
.snapping input { appearance: none; width: 14px; height: 14px; border: 2px solid #999; border-radius: 2px; }
.workspaces { margin-left: auto; display: flex; gap: 44px; }
.workspaces .cur { color: #4a9bea; margin-right: -22px; gap: 10px; }
.burger { width: 10px; height: 10px; }
.more { color: #bbb; margin: 0 9px 0 40px; }
.wp { color: #bbb; margin: 0 11px 0 5px; }
.wp svg { width: 20px; height: 12px; }
.help { display: flex; align-items: center; gap: 10px; width: 193px; height: 18px; padding-left: 5px; background: #171717; color: #c0c0c0; }
.help svg { width: 13px; height: 13px; }
.help input { flex: 1; }
.help input::placeholder { color: #c0c0c0; opacity: 1; }

/* Panels */
.workspace { flex: 1; min-height: 0; display: grid; grid-template-columns: minmax(0, 1fr) 210px; gap: 4px; padding-top: 2px; }
.left { display: grid; grid-template-rows: minmax(0, 518fr) minmax(0, 488fr); gap: 4px; min-height: 0; }
.upper { display: grid; grid-template-columns: minmax(0, 492fr) minmax(0, 1210fr); gap: 4px; min-height: 0; }
.panel { background: #232323; display: flex; flex-direction: column; min-width: 0; min-height: 0; }
.tabs { display: flex; align-items: flex-start; height: 26px; flex: none; padding: 4px 10px 0 11px; gap: 20px; }
.tab { height: 21px; border-bottom: 2px solid transparent; padding: 0 2px 1px; gap: 9px; color: #7f7f7f; }
.tab.cur { color: #c4c4c4; border-color: #bdbdbd; }
.tab b { font-weight: 400; color: #4389ce; }
.sw { width: 10px; height: 10px; }
.seafoam { background: #b3cbbb; } .seafoam2 { background: #b4cbb5; } .custard { background: #dcdc55; } .sand { background: #9f9079; } .sand2 { background: #b3a27c; }
.cell { display: flex; align-items: center; }

/* Project */
.fx { gap: 10px; margin-left: 13px; color: #858585; }
.fx em { color: #666; }
.searchbox { display: flex; align-items: center; height: 18px; background: #171717; color: #b5b5b5; padding-left: 6px; }
.searchbox svg { width: 18px; height: 12px; }
.searchbox input { flex: 1; }
.project .searchbox { margin: 113px 7px 9px 8px; }
table { border-collapse: collapse; table-layout: fixed; width: 100%; }
td, th { padding: 0; text-align: left; font-weight: 400; white-space: nowrap; }
.c-name { width: 289px; } .c-type { width: 73px; } .c-label { width: 76px; }
.files th { height: 18px; background: #303030; color: #8b8b8b; font-size: 9px; line-height: 13px; padding: 0 0 1px 6px; border-right: 1px solid #222; }
.files th:first-child { padding-left: 23px; }
.files thead { border: solid #151515; border-width: 1px 0; }
.files td { height: 19px; padding-left: 7px; color: #979797; }
.files td:first-child { padding-left: 4px; color: #adadad; }
.files td:nth-child(3) { padding-left: 5px; }
.files .tagth { padding-left: 32px; }
.files td .sw { display: inline-block; margin-right: 7px; vertical-align: -1px; }
.files .treetd { padding-left: 38px; color: #b0b0b0; }
.sort { display: inline-block; margin-left: 28px; border: 7px solid transparent; border-top: 0; border-bottom: 6px solid #4389ce; }
.i13 { width: 13px; height: 13px; color: #bcbcbc; }
.chev { width: 10px; height: 6px; margin-right: 4px; }
.fold { width: 15px; height: 12px; margin-right: 4px; color: #b5b5b5; }
.child { padding-left: 32px; }
.compi { width: 16px; height: 14px; margin-right: 4px; }
.projfoot { margin-top: auto; height: 20px; display: flex; align-items: center; gap: 7px; padding-left: 4px; border-top: 1px solid #151515; color: #b0b0b0; }
.projfoot svg { width: 18px; height: 13px; }
.projfoot .small { height: 11px; }
.projfoot .bpc { font-size: 10px; color: #858585; margin: 0 4px 0 5px; }
.hscroll { width: 172px; height: 15px; border-radius: 7px; background: #303030; }

/* Viewer */
.viewer .tabs { padding-left: 10px; gap: 34px; }
.comp { gap: 9px; padding: 0 0 1px; }
.x { font-size: 12px; color: #999; width: 6px; }
.lk { width: 11px; height: 13px; }
.layer { color: #777; }
.crumb { align-self: flex-start; width: 76px; height: 16px; margin: 4px 0 0 20px; padding-left: 8px; background: #191919; color: #4389ce; }
.stage { flex: 1; min-height: 0; display: flex; align-items: center; justify-content: center; border-bottom: 1px solid #151515; padding-top: 5px; }
.canvas { width: 39.6%; aspect-ratio: 16 / 9; background: #000; }
.viewfoot { height: 23px; flex: none; display: flex; align-items: center; color: #adadad; }
.viewfoot button { width: 22px; justify-content: center; height: 20px; }
.viewfoot svg { width: 15px; height: 14px; }
.viewfoot select { height: 18px; }
.viewfoot .on { color: #4389ce; background: #151a20; }
.viewfoot .onw { background: #151515; }
.viewfoot .off { color: #404040; }
.viewfoot .time { width: 71px; color: #8d8d8d; }
.s-zoom { width: 66px; margin-left: 2px; } .s-res { width: 86px; margin-left: 3px; } .s-cam { width: 103px; margin-left: 2px; } .s-view { width: 69px; margin-left: 5px; }
.viewfoot .exp { margin: 0 3px; }
.viewfoot .blue { font-size: 10px; }

/* Timeline */
.timeline { border: 1px solid #294766; }
.tltabs { height: 27px; padding: 3px 0 0 26px; gap: 36px; }
.rq { color: #909090; }
.tlcomp { gap: 9px; padding: 0 0 1px; }
.tlbody { flex: 1; min-height: 0; display: flex; }
.layers { flex: 0 0 44%; min-width: 0; border-right: 1px solid #151515; }
.tlhead { display: flex; align-items: flex-start; height: 35px; }
.tc { width: 107px; display: flex; flex-direction: column; align-items: center; padding-right: 6px; }
.now { font-size: 15px; line-height: 20px; font-weight: 500; color: #4389ce; }
.tc small { font-size: 10px; line-height: 10px; color: #234c72; }
.tls { width: 440px; margin-top: 7px; }
.tlicons { display: flex; padding: 8px 0 0 15px; gap: 10px; color: #adadad; }
.tlicons svg { width: 17px; height: 15px; }
.tlicons button { height: 16px; }
.tlicons button:nth-child(2) { margin: 0 7px; }
.tlicons .last { margin-left: 7px; }
.l-av { width: 70px; } .l-tag { width: 33px; } .l-num { width: 32px; } .l-name { width: 265px; } .l-sw { width: 147px; } .l-parent { width: 118px; } .l-dur { width: 70px; }
.layertable th { height: 19px; background: #303030; color: #8b8b8b; font-size: 9px; }
.layertable td { height: 17px; line-height: 15px; border-bottom: 1px solid #1b1b1b; background: #2e2e2e; }
.layertable .sel td { background: #474747; }
.layertable th:nth-child(3), .layertable td:nth-child(3) { padding-left: 4px; }
.layertable .ln { padding-left: 4px; }
.layertable th:nth-child(6), .layertable th:nth-child(7), .layertable td:nth-child(6), .layertable td:nth-child(7) { padding-left: 5px; }
.av, .switches { display: flex; align-items: center; color: #b5b5b5; gap: 3px; padding-left: 4px; }
.av { padding-left: 5px; }
.av svg, .av i { width: 12px; height: 12px; }
.switches svg, .switches i { width: 12px; height: 12px; }
.av .slot { background: rgb(0 0 0 / 15%); }
.switches .slot { background: rgb(0 0 0 / 30%); }
.switches .fxl { font: italic 12px/12px "Liberation Serif", serif; }
.tagcell { padding-left: 11px; }
.layertable .tagcell { padding-left: 11px; }
.tagc { gap: 6px; padding-left: 3px; }
.chevr { width: 6px; height: 9px; }
.sw.big { width: 13px; height: 12px; }
.lname svg { width: 13px; height: 14px; margin: 0 3px 0 1px; }
.lname b { flex: 1; font-weight: 500; padding-left: 4px; line-height: 16px; color: #b5b5b5; }
.sel .lname b { background: #9b9b9b; color: #262626; }
.whip { width: 12px; height: 12px; margin-right: 6px; }
.layertable select { width: 88px; height: 15px; padding-left: 6px; }
.layertable .dur { color: #3d81c4; padding-left: 5px; }

.graph { flex: 1; min-width: 0; display: flex; flex-direction: column; position: relative; padding-top: 5px; }
.navi, .workarea { display: flex; justify-content: space-between; background: #656565; border: solid #151515; border-width: 1px 0; }
.navi { height: 10px; }
.workarea { height: 17px; background: #5e5e5e; }
.navi i, .workarea i { width: 6px; background: #4a9bea; border-radius: 4px 0 0 4px; }
.navi i + i, .workarea i + i { border-radius: 0 4px 4px 0; }
.ruler { height: 19px; padding: 0 6px; }
.ruler ol { list-style: none; margin: 0 0 0 calc(-100% / 18); padding: 0; width: calc(100% * 10 / 9); display: grid; grid-template-columns: repeat(10, 1fr); font-size: 10px; line-height: 14px; text-align: center; color: #999; }
.ruler li:first-child { text-indent: 14px; }
.ruler li::after { content: ""; display: block; width: 1px; height: 5px; margin: 0 auto; background: #888; }
.cache { height: 4px; padding: 0 6px; background: #14400f; }
.cache i { height: 3px; background: #35c73a; }
.bar { height: 17px; border-bottom: 1px solid #262b25; }
.bar i { height: 100%; width: 14.100%; }
.one { background: linear-gradient(#aec2aa, #93a990); }
.one i { background: #6c706b; }
.two { background: #4b504b; padding-left: 6px; height: 16px; border-color: #666; }
.two i { background: #788175; width: 13.600%; }
.empty { flex: 1; padding: 0 6px; background: #262626; }
.empty i { height: 100%; background: #313131; }
.playlane { position: absolute; top: 5px; bottom: 0; left: 6px; right: 6px; pointer-events: none; }
.playhead { position: absolute; top: 0; bottom: 0; width: 2px; margin-left: -1px; background: linear-gradient(#4389ce 8px, transparent 8px, transparent 14px, #3a78b4 14px); }
.playhead svg { width: 12px; height: 13px; margin: 14px 0 0 -5px; }
.markers { width: 17px; padding: 36px 0 0 3px; color: #b5b5b5; background: #232323; }
.markers svg { width: 11px; height: 14px; }
.markers .cb { width: 13px; height: 12px; margin: 7px 0 0 -2px; }
.tlfoot { height: 17px; flex: none; display: flex; align-items: center; border-top: 1px solid #151515; }
.footl { display: flex; gap: 7px; padding-left: 5px; color: #2f6fae; width: 411px; }
.footl svg { width: 12px; height: 12px; }
.footl .w { color: #b5b5b5; }
.toggle { color: #999; width: 343px; }
.zoomer { display: flex; align-items: center; color: #b5b5b5; }
.m1 { width: 9px; height: 5px; margin-right: 12px; }
.m2 { width: 16px; height: 9px; margin-left: 11px; }
input[type="range"] { appearance: none; width: 48px; height: 12px; background: linear-gradient(#444, #444) center / 100% 2px no-repeat; }
input[type="range"]::-webkit-slider-thumb { appearance: none; width: 10px; height: 10px; border: 2px solid #aaa; border-radius: 50%; background: #232323; }

/* Right column */
.right { display: flex; flex-direction: column; gap: 3px; min-height: 0; }
.right .panel { overflow: hidden; }
.info { height: 145px; flex: none; }
.infobody { display: flex; height: 66px; padding: 4px 0 0 8px; border-bottom: 1px solid #303030; color: #858585; font-size: 10px; line-height: 14px; }
.chip { width: 19px; height: 20px; background: #000; margin: 14px 7px 0 0; }
.infobody dl { margin: 0; display: grid; grid-template-columns: 19px auto; align-content: start; grid-auto-rows: 14px; }
.infobody dd { margin: 0; }
.xy { display: flex; margin-left: 42px; padding-left: 10px; gap: 4px; height: 50px; border-left: 1px solid #2c2c2c; }
.xy dl { grid-template-columns: 16px auto; }
.plus { font-size: 16px; line-height: 16px; margin-top: 16px; }
.preview { height: 109px; flex: none; }
.preview .tabs { height: 26px; padding-top: 5px; }
.preview .tab { color: #b5b5b5; }
.transport { display: flex; gap: 4px; height: 33px; padding-left: 32px; margin: 0 10px; border-bottom: 1px solid #2d2d2d; color: #bcbcbc; }
.transport button { width: 20px; justify-content: center; }
.transport svg { width: 13px; height: 10px; }
.flip { transform: scaleX(-1); }
.muted { color: #858585; padding: 6px 6px 2px; }
.shortrow { display: flex; gap: 9px; padding: 1px 0 0 8px; }
.shortrow select { width: 166px; height: 18px; }
.shortrow svg { width: 14px; height: 12px; color: #bcbcbc; }

.character > * { flex: none; }
.character { height: 257px; flex: none; }
.character .tabs { padding: 5px 6px 0 4px; gap: 0; height: 38px; }
.character .lib { margin-right: 37px; }
.character .more { margin: 5px 0 0 auto; }
.fontrow { display: flex; padding-left: 6px; gap: 6px; height: 48px; }
.fontsel { display: flex; flex-direction: column; gap: 6px; }
.fontsel select { width: 120px; height: 18px; }
.picks { display: flex; flex-direction: column; gap: 8px; width: 19px; color: #bcbcbc; }
.bw { height: 17px; border: 1px solid #ccc; background: linear-gradient(#000 50%, #fff 50%); }
.fillstroke { width: 44px; height: 44px; color: #aaa; margin-top: -1px; }
.grid { display: grid; grid-template-columns: 20px 40px 12px 1fr 28px 40px 12px; column-gap: 4px; grid-auto-rows: 20px; align-items: center; padding: 2px 13px 0 4px; margin: 0; color: #858585; }
.grid svg { width: 17px; height: 15px; color: #bcbcbc; justify-self: center; }
.grid b:nth-of-type(odd) + svg { grid-column: 5; justify-self: start; margin-left: 4px; }
.grid label { display: flex; gap: 4px; }
.grid b { font-size: 10px; font-weight: 400; color: #999; }
.grid input { width: 20px; color: #4389ce; }
.grid .n1, .n1 { width: 7px; color: #4389ce; }
.ghost { color: #484848; }
.strokerow { margin: 12px 0 9px; padding-top: 0; }
.strokerow select { grid-column: 4 / 8; width: auto; height: 17px; }
.faux { display: flex; gap: 7px; padding: 14px 0 0 26px; font: 15px/16px "Liberation Serif", serif; color: #bcbcbc; }
.faux button { width: 20px; height: 18px; justify-content: center; font: inherit; }
.faux .on { color: #4389ce; background: #15181c; }
.faux small { font-size: 11px; } .faux sup, .faux sub { font-size: 8px; line-height: 8px; } .faux sup { align-self: flex-start; } .faux sub { align-self: flex-end; }
.faux em { font-style: italic; }
.peek { display: flex; gap: 85px; padding: 11px 0 0 11px; }
.peek i { width: 13px; height: 2px; background: #777; }

.paragraph { flex: 1; }
.paragraph .tabs { padding-top: 5px; }
.aligns { display: flex; height: 36px; align-items: center; padding-left: 7px; border-bottom: 1px solid #2b2b2b; color: #bcbcbc; }
.aligns button { width: 20px; height: 20px; justify-content: center; margin-right: 5px; }
.aligns i { width: 5px; }
.aligns svg { width: 16px; height: 14px; }
.aligns .on { color: #3b86d2; background: #141b24; }
.indents { display: grid; grid-template-columns: 71px 68px 60px; grid-auto-rows: 19px; padding-left: 7px; color: #858585; }
.indents label { display: flex; align-items: center; gap: 5px; }
.indents svg { width: 16px; height: 15px; color: #bcbcbc; }
.indents .n1 { width: 7px; }
.dirs { display: flex; gap: 4px; }
.dirs button { width: 19px; height: 20px; justify-content: center; }
.dirs .on { background: #14181d; }
.dirs .on svg { color: #4a9bea; }

/* Overlays */
.cursor { position: absolute; left: 57px; top: 684px; width: 16px; height: 26px; }
.badge { position: fixed; right: 43px; bottom: 39px; width: 102px; height: 102px; }
```
